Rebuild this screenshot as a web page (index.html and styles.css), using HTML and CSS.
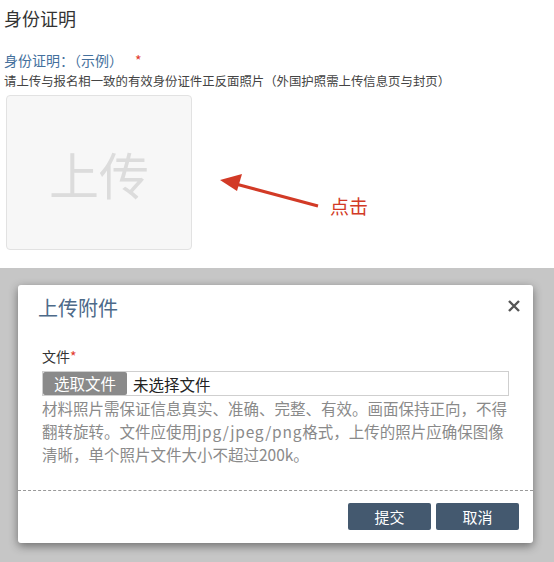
FILE: index.html
```html
<!DOCTYPE html>
<html lang="zh-CN">

<head>
  <meta charset="UTF-8" />
  <meta name="viewport" content="width=device-width, initial-scale=1.0" />
  <title>身份证明</title>
  <link rel="stylesheet" href="styles.css">
</head>

<body>
  <!-- Form section with upload placeholder -->
  <div class="page">
    <h3 class="page-title">身份证明</h3>
    <div class="field-label">身份证明：（示例）<span class="req">*</span></div>
    <div class="field-desc">请上传与报名相一致的有效身份证件正反面照片（外国护照需上传信息页与封页）</div>
    <div class="upload-row">
      <div class="upload-box">上传</div>
      <svg class="arrow" width="104" height="40" viewBox="0 0 104 40">
        <line x1="14" y1="12" x2="100" y2="35" stroke="#d23a26" stroke-width="3.2" />
        <polygon points="2,9 24,3 19,20" fill="#d23a26" />
      </svg>
      <span class="hint">点击</span>
    </div>
  </div>

  <!-- Modal dialog over a dimmed backdrop -->
  <div class="backdrop">
    <div class="modal">
      <div class="modal-head">
        <span class="modal-title">上传附件</span>
        <svg class="close" width="12" height="12" viewBox="0 0 12 12">
          <path d="M1 1 L11 11 M11 1 L1 11" stroke="#555" stroke-width="2.4" />
        </svg>
      </div>
      <div class="modal-body">
        <div class="file-label">文件<span class="req">*</span></div>
        <div class="file-input">
          <span class="file-btn">选取文件</span>
          <span class="file-name">未选择文件</span>
        </div>
        <p class="help">材料照片需保证信息真实、准确、完整、有效。画面保持正向，不得翻转旋转。文件应使用<span class="fmt">jpg/jpeg/png</span>格式，上传的照片应确保图像清晰，单个照片文件大小不超过200k。</p>
      </div>
      <div class="modal-foot">
        <button class="btn">提交</button>
        <button class="btn">取消</button>
      </div>
    </div>
  </div>
</body>

</html>
```

FILE: styles.css
```css
body {
  margin: 0;
  font-family: "Noto Sans CJK SC", "Noto Sans", sans-serif;
  background: #fff;
  color: #333;
}

.page {
  height: 268px;
  padding: 0 0 0 4px;
  box-sizing: border-box;
  overflow: hidden;
}

.page-title {
  margin: 0;
  padding-top: 6px;
  font-size: 18px;
  font-weight: normal;
  line-height: 24px;
  color: #333;
}

.field-label {
  margin-top: 20px;
  font-size: 14px;
  line-height: 20px;
  color: #44709d;
}

.req {
  color: #e23a2e;
  margin-left: 12px;
}

.field-desc {
  margin-top: 3px;
  font-size: 12.4px;
  line-height: 17px;
  color: #444;
}

.upload-row {
  display: flex;
  align-items: flex-start;
  margin-top: 5px;
}

/* Empty upload slot */
.upload-box {
  width: 184px;
  height: 153px;
  margin-left: 2px;
  border: 1px solid #e2e2e2;
  border-radius: 4px;
  background: #f7f7f7;
  color: #dcdcdc;
  font-size: 50px;
  display: flex;
  align-items: center;
  justify-content: center;
  box-sizing: content-box;
}

.arrow {
  margin: 76px 0 0 26px;
}

.hint {
  margin: 97px 0 0 8px;
  font-size: 19px;
  color: #d23a26;
}

.backdrop {
  height: 294px;
  background: #c6c6c6;
  padding: 17px 21px 0 18px;
  box-sizing: border-box;
}

.modal {
  background: #fff;
  border-radius: 3px;
  box-shadow: 0 3px 10px rgba(0, 0, 0, 0.45);
  height: 258px;
  display: flex;
  flex-direction: column;
}

.modal-head {
  display: flex;
  justify-content: space-between;
  align-items: center;
  padding: 9px 13px 0 20px;
}

.modal-title {
  font-size: 20px;
  color: #4d6a89;
  line-height: 28px;
}

.close {
  margin-top: -4px;
}

.modal-body {
  padding: 24px 24px 0 24px;
  flex: 1;
}

.file-label {
  font-size: 14px;
  line-height: 20px;
  color: #333;
}

.file-label .req {
  margin-left: 0;
}

.file-input {
  display: flex;
  align-items: center;
  margin-top: 5px;
  height: 25px;
  border: 1px solid #cfcfcf;
  box-sizing: border-box;
}

.file-btn {
  background: #8a8a8a;
  color: #fff;
  font-size: 15.5px;
  height: 23px;
  line-height: 23px;
  padding: 0 11px;
  border-radius: 2px;
}

.file-name {
  margin-left: 6px;
  font-size: 15.5px;
  color: #222;
}

.help {
  margin: 1px 0 0;
  font-size: 15.5px;
  line-height: 23px;
  color: #8a8a8a;
}

.fmt {
  letter-spacing: 0.8px;
}

.modal-foot {
  border-top: 1px dashed #999;
  display: flex;
  justify-content: flex-end;
  gap: 5px;
  padding: 12px 14px 13px 0;
}

.btn {
  width: 83px;
  height: 27px;
  border: none;
  border-radius: 2px;
  background: #44596f;
  color: #fff;
  font-family: inherit;
  font-size: 15px;
}
```
